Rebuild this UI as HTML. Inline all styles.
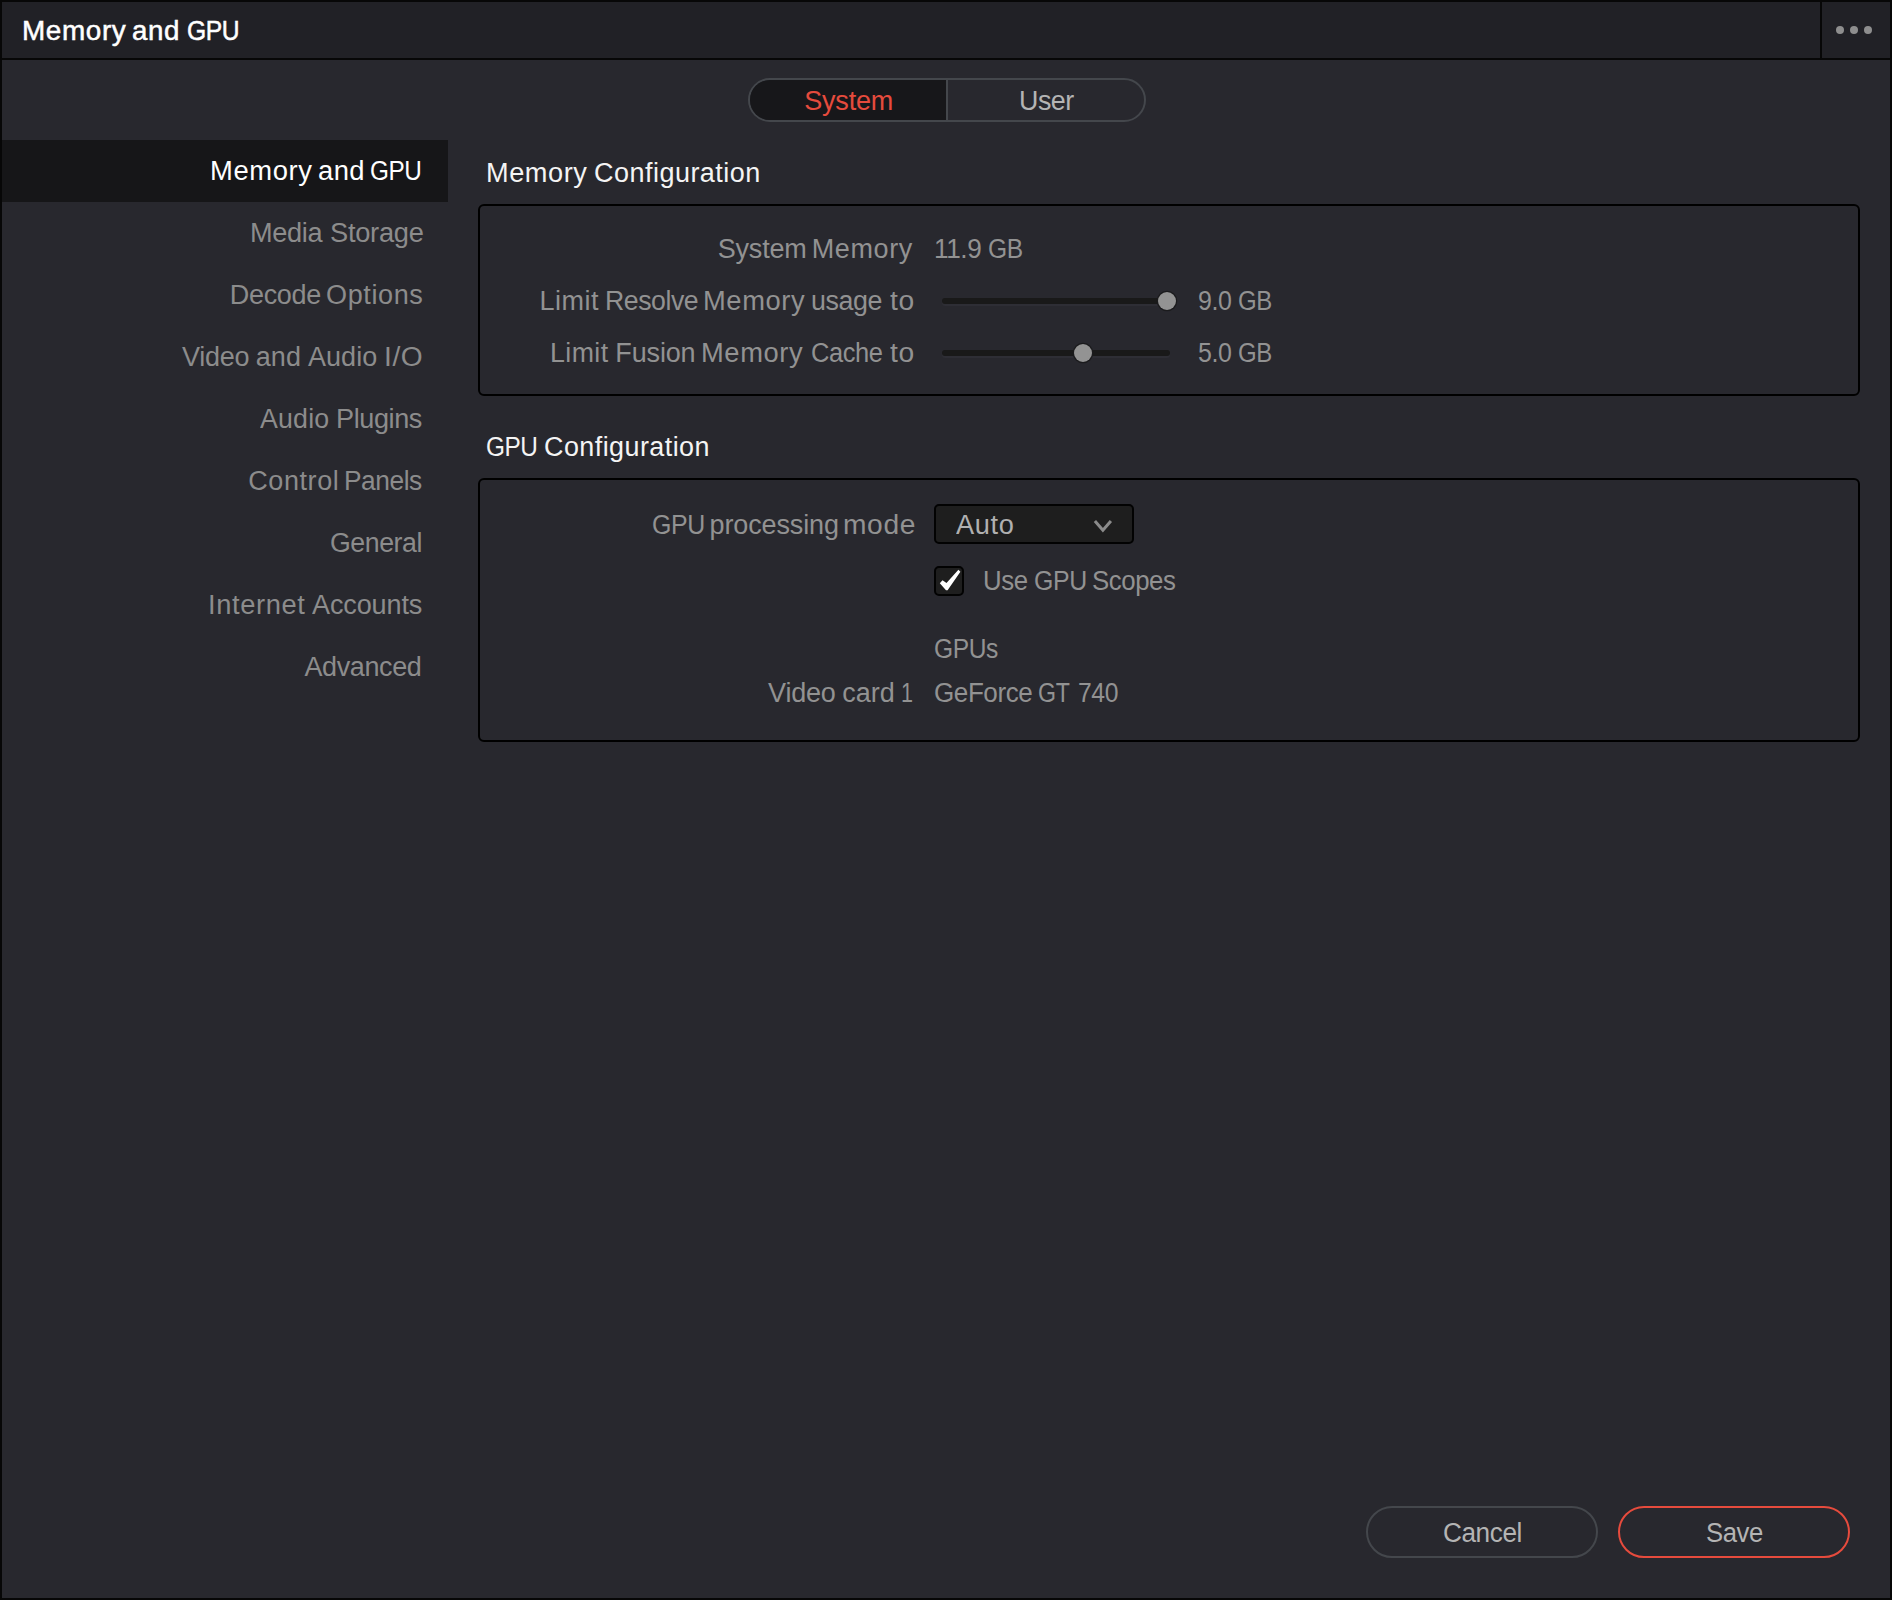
<!DOCTYPE html>
<html><head><meta charset="utf-8"><title>Memory and GPU</title><style>
html,body{margin:0;padding:0;}
body{width:1892px;height:1600px;overflow:hidden;background:#070707;position:relative;
 font-family:"Liberation Sans",sans-serif;font-size:27px;line-height:32px;}
.a{position:absolute;}
.t{position:absolute;white-space:nowrap;height:32px;}
</style></head>
<body>
<div class="a" style="left:2px;top:2px;width:1818px;height:56px;background:#212126"></div>
<div class="a" style="left:1822px;top:2px;width:68px;height:56px;background:#212126"></div>
<div class="a" style="left:2px;top:60px;width:1888px;height:1538px;background:#28282e"></div>
<div class="a" style="left:1836px;top:26px;width:8px;height:8px;border-radius:50%;background:#8e8e8e"></div>
<div class="a" style="left:1850px;top:26px;width:8px;height:8px;border-radius:50%;background:#8e8e8e"></div>
<div class="a" style="left:1864px;top:26px;width:8px;height:8px;border-radius:50%;background:#8e8e8e"></div>
<div class="a" style="left:2px;top:140px;width:446px;height:62px;background:#161618"></div>
<div class="a" style="left:748px;top:78px;width:394px;height:40px;border:2px solid #44474c;border-radius:22px;overflow:hidden;"><div class="a" style="left:0;top:0;width:196px;height:40px;background:#17171a"></div><div class="a" style="left:196px;top:0;width:2px;height:40px;background:#44474c"></div></div>
<div class="a" style="left:478px;top:204px;width:1378px;height:188px;border:2px solid #000;border-radius:6px"></div>
<div class="a" style="left:478px;top:478px;width:1378px;height:260px;border:2px solid #000;border-radius:6px"></div>
<div class="a" style="left:942px;top:298px;width:228px;height:6px;border-radius:3px;background:#191919;box-shadow:0 2px 0 #2e2e35"></div>
<div class="a" style="left:1158px;top:292px;width:18px;height:18px;border-radius:50%;background:#939393;box-shadow:0 0 0 1.3px #1b1b1d"></div>
<div class="a" style="left:942px;top:350px;width:228px;height:6px;border-radius:3px;background:#191919;box-shadow:0 2px 0 #2e2e35"></div>
<div class="a" style="left:1074px;top:344px;width:18px;height:18px;border-radius:50%;background:#939393;box-shadow:0 0 0 1.3px #1b1b1d"></div>
<div class="a" style="left:934px;top:504px;width:196px;height:36px;border:2px solid #020202;border-radius:5px;background:#1e1e1e"></div>
<svg class="a" style="left:1090px;top:514px" width="26" height="24" viewBox="0 0 26 24"><path d="M4.9 7.0 L12.9 16.2 L20.9 7.0" fill="none" stroke="#8b8b8b" stroke-width="3" stroke-linecap="butt" stroke-linejoin="miter"/></svg>
<div class="a" style="left:934px;top:566px;width:26px;height:26px;border:2px solid #020202;border-radius:5px;background:#1e1e1e"></div>
<svg class="a" style="left:934px;top:566px" width="30" height="30" viewBox="0 0 30 30"><polygon points="5.8,17.2 8.5,14.2 12.5,17.0 24.4,3.7 26.4,5.7 13.6,24.3 12.0,24.3" fill="#fff"/></svg>
<div class="a" style="left:1366px;top:1506px;width:228px;height:48px;border:2px solid #44474c;border-radius:26px"></div>
<div class="a" style="left:1618px;top:1506px;width:228px;height:48px;border:2px solid #e64b3d;border-radius:26px"></div>
<div class="t" id="title_0" style="left:21.6px;top:15px;color:#ffffff;letter-spacing:0.6px;transform:scaleX(1.0323);transform-origin:left center;-webkit-text-stroke:0.5px #fff;">Memory</div>
<div class="t" id="title_1" style="left:132.05px;top:15px;color:#ffffff;letter-spacing:0.6px;transform:scaleX(1.025);transform-origin:left center;-webkit-text-stroke:0.5px #fff;">and</div>
<div class="t" id="title_2" style="left:186.6px;top:15px;color:#ffffff;letter-spacing:-0.45px;transform:scaleX(0.9127);transform-origin:left center;-webkit-text-stroke:0.5px #fff;">GPU</div>
<div class="t" id="s0_0" style="left:209.7px;top:155px;color:#ffffff;letter-spacing:0.6px;transform:scaleX(1.0142);transform-origin:left center;">Memory</div>
<div class="t" id="s0_1" style="left:317.6px;top:155px;color:#ffffff;letter-spacing:0.4px;transform:scaleX(1.014);transform-origin:left center;">and</div>
<div class="t" id="s0_2" style="left:370.25px;top:155px;color:#ffffff;letter-spacing:-0.45px;transform:scaleX(0.9);transform-origin:left center;">GPU</div>
<div class="t" id="s1_0" style="left:249.8px;top:217px;color:#8c8c8c;letter-spacing:-0.325px;transform:scaleX(1.0057);transform-origin:left center;">Media</div>
<div class="t" id="s1_1" style="left:329.8px;top:217px;color:#8c8c8c;letter-spacing:-0.267px;transform:scaleX(1.0088);transform-origin:left center;">Storage</div>
<div class="t" id="s2_0" style="left:229.8px;top:279px;color:#8c8c8c;letter-spacing:-0.34px;">Decode</div>
<div class="t" id="s2_1" style="left:325.9px;top:279px;color:#8c8c8c;letter-spacing:0.6px;transform:scaleX(1.0022);transform-origin:left center;">Options</div>
<div class="t" id="s3_0" style="left:182.1px;top:341px;color:#8c8c8c;letter-spacing:-0.275px;">Video</div>
<div class="t" id="s3_1" style="left:255.8px;top:341px;color:#8c8c8c;letter-spacing:0.05px;">and</div>
<div class="t" id="s3_2" style="left:308.1px;top:341px;color:#8c8c8c;">Audio</div>
<div class="t" id="s3_3" style="left:384.0px;top:341px;color:#8c8c8c;letter-spacing:0.6px;transform:scaleX(1.0412);transform-origin:left center;">I/O</div>
<div class="t" id="s4_0" style="left:260.0px;top:403px;color:#8c8c8c;letter-spacing:0.175px;transform:scaleX(0.9914);transform-origin:left center;">Audio</div>
<div class="t" id="s4_1" style="left:335.7px;top:403px;color:#8c8c8c;letter-spacing:-0.4px;transform:scaleX(1.0024);transform-origin:left center;">Plugins</div>
<div class="t" id="s5_0" style="left:248.2px;top:465px;color:#8c8c8c;letter-spacing:0.6px;">Control</div>
<div class="t" id="s5_1" style="left:343.8px;top:465px;color:#8c8c8c;letter-spacing:-0.45px;transform:scaleX(0.9744);transform-origin:left center;">Panels</div>
<div class="t" id="s6" style="left:330.3px;top:527px;color:#8c8c8c;letter-spacing:-0.45px;transform:scaleX(0.989);transform-origin:left center;">General</div>
<div class="t" id="s7_0" style="left:207.8px;top:589px;color:#8c8c8c;letter-spacing:0.6px;transform:scaleX(1.0106);transform-origin:left center;">Internet</div>
<div class="t" id="s7_1" style="left:312.2px;top:589px;color:#8c8c8c;letter-spacing:-0.129px;transform:scaleX(1.0019);transform-origin:left center;">Accounts</div>
<div class="t" id="s8" style="left:304.4px;top:651px;color:#8c8c8c;letter-spacing:-0.371px;">Advanced</div>
<div class="t" id="tsys" style="left:804.3px;top:85px;color:#e64b3d;letter-spacing:-0.22px;">System</div>
<div class="t" id="tusr" style="left:1018.6px;top:85px;color:#b4b4b4;letter-spacing:-0.45px;transform:scaleX(0.9928);transform-origin:left center;">User</div>
<div class="t" id="h1_0" style="left:485.7px;top:157px;color:#f4f4f4;letter-spacing:0.56px;transform:scaleX(1.0062);transform-origin:left center;">Memory</div>
<div class="t" id="h1_1" style="left:594.0px;top:157px;color:#f4f4f4;letter-spacing:0.475px;">Configuration</div>
<div class="t" id="h2_0" style="left:486.0px;top:431px;color:#f4f4f4;letter-spacing:-0.45px;transform:scaleX(0.9019);transform-origin:left center;">GPU</div>
<div class="t" id="h2_1" style="left:544.3px;top:431px;color:#f4f4f4;letter-spacing:0.442px;transform:scaleX(0.9975);transform-origin:left center;">Configuration</div>
<div class="t" id="l1_0" style="left:717.75px;top:233px;color:#929292;letter-spacing:-0.21px;">System</div>
<div class="t" id="l1_1" style="left:811.75px;top:233px;color:#929292;letter-spacing:0.6px;">Memory</div>
<div class="t" id="l2_0" style="left:539.6px;top:285px;color:#929292;letter-spacing:0.5px;">Limit</div>
<div class="t" id="l2_1" style="left:605.3px;top:285px;color:#929292;letter-spacing:-0.45px;transform:scaleX(0.987);transform-origin:left center;">Resolve</div>
<div class="t" id="l2_2" style="left:703.1px;top:285px;color:#929292;letter-spacing:0.6px;transform:scaleX(1.0122);transform-origin:left center;">Memory</div>
<div class="t" id="l2_3" style="left:811.1px;top:285px;color:#929292;letter-spacing:-0.45px;transform:scaleX(0.9943);transform-origin:left center;">usage</div>
<div class="t" id="l2_4" style="left:889.5px;top:285px;color:#929292;letter-spacing:0.6px;transform:scaleX(1.0459);transform-origin:left center;">to</div>
<div class="t" id="l3_0" style="left:549.6px;top:337px;color:#929292;letter-spacing:0.425px;transform:scaleX(0.9895);transform-origin:left center;">Limit</div>
<div class="t" id="l3_1" style="left:615.3px;top:337px;color:#929292;letter-spacing:-0.14px;">Fusion</div>
<div class="t" id="l3_2" style="left:701.1px;top:337px;color:#929292;letter-spacing:0.6px;transform:scaleX(1.0122);transform-origin:left center;">Memory</div>
<div class="t" id="l3_3" style="left:810.5px;top:337px;color:#929292;letter-spacing:-0.45px;transform:scaleX(0.9433);transform-origin:left center;">Cache</div>
<div class="t" id="l3_4" style="left:889.5px;top:337px;color:#929292;letter-spacing:0.6px;transform:scaleX(1.0459);transform-origin:left center;">to</div>
<div class="t" id="l4_0" style="left:652.1px;top:509px;color:#929292;letter-spacing:-0.45px;transform:scaleX(0.9237);transform-origin:left center;">GPU</div>
<div class="t" id="l4_1" style="left:709.6px;top:509px;color:#929292;letter-spacing:-0.133px;">processing</div>
<div class="t" id="l4_2" style="left:843.1px;top:509px;color:#929292;letter-spacing:0.6px;transform:scaleX(1.0439);transform-origin:left center;">mode</div>
<div class="t" id="l5_0" style="left:768.1px;top:677px;color:#929292;letter-spacing:-0.225px;">Video</div>
<div class="t" id="l5_1" style="left:842.3px;top:677px;color:#929292;">card</div>
<div class="t" id="l5_2" style="left:901.2px;top:677px;color:#929292;transform:scaleX(0.8);transform-origin:left center;">1</div>
<div class="t" id="v1_0" style="left:934.4px;top:233px;color:#929292;letter-spacing:-0.45px;transform:scaleX(0.9698);transform-origin:left center;">11.9</div>
<div class="t" id="v1_1" style="left:988.3px;top:233px;color:#929292;letter-spacing:-0.45px;transform:scaleX(0.9111);transform-origin:left center;">GB</div>
<div class="t" id="v2_0" style="left:1198.0px;top:285px;color:#929292;letter-spacing:-0.45px;transform:scaleX(0.9258);transform-origin:left center;">9.0</div>
<div class="t" id="v2_1" style="left:1238.3px;top:285px;color:#929292;letter-spacing:-0.45px;transform:scaleX(0.8891);transform-origin:left center;">GB</div>
<div class="t" id="v3_0" style="left:1198.0px;top:337px;color:#929292;letter-spacing:-0.45px;transform:scaleX(0.9258);transform-origin:left center;">5.0</div>
<div class="t" id="v3_1" style="left:1238.3px;top:337px;color:#929292;letter-spacing:-0.45px;transform:scaleX(0.8891);transform-origin:left center;">GB</div>
<div class="t" id="auto" style="left:956.0px;top:509px;color:#b0b0b0;letter-spacing:0.6px;transform:scaleX(1.0073);transform-origin:left center;">Auto</div>
<div class="t" id="chk_0" style="left:983.4px;top:565px;color:#929292;letter-spacing:-0.45px;transform:scaleX(0.9547);transform-origin:left center;">Use</div>
<div class="t" id="chk_1" style="left:1034.25px;top:565px;color:#929292;letter-spacing:-0.45px;transform:scaleX(0.9219);transform-origin:left center;">GPU</div>
<div class="t" id="chk_2" style="left:1092.0px;top:565px;color:#929292;letter-spacing:-0.45px;transform:scaleX(0.9559);transform-origin:left center;">Scopes</div>
<div class="t" id="gpus" style="left:934.1px;top:633px;color:#929292;letter-spacing:-0.45px;transform:scaleX(0.9101);transform-origin:left center;">GPUs</div>
<div class="t" id="gf_0" style="left:934.1px;top:677px;color:#929292;letter-spacing:-0.45px;transform:scaleX(0.965);transform-origin:left center;">GeForce</div>
<div class="t" id="gf_1" style="left:1038.25px;top:677px;color:#929292;letter-spacing:-0.45px;transform:scaleX(0.8585);transform-origin:left center;">GT</div>
<div class="t" id="gf_2" style="left:1077.9px;top:677px;color:#929292;letter-spacing:-0.45px;transform:scaleX(0.9146);transform-origin:left center;">740</div>
<div class="t" id="cancel" style="left:1443.1px;top:1517px;color:#b4b4b4;letter-spacing:-0.45px;transform:scaleX(0.9697);transform-origin:left center;">Cancel</div>
<div class="t" id="save" style="left:1706.0px;top:1517px;color:#b4b4b4;letter-spacing:-0.45px;transform:scaleX(0.9517);transform-origin:left center;">Save</div>
</body></html>
